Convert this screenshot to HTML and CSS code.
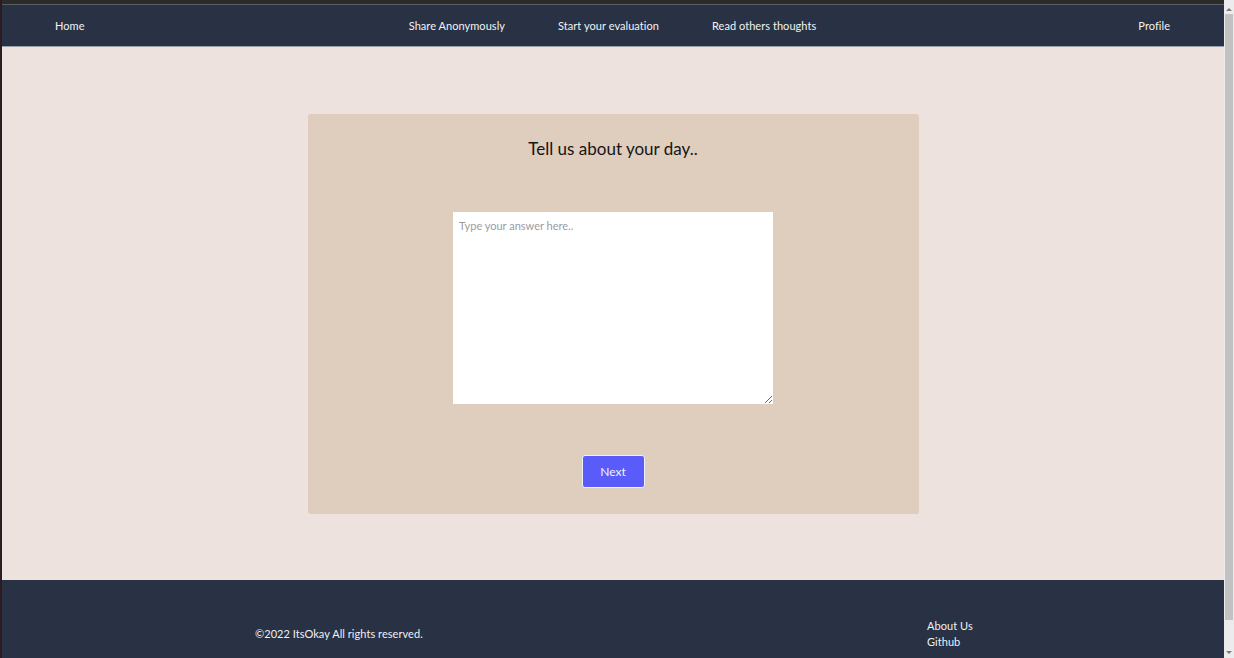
FILE: index.html
```html
<!DOCTYPE html>
<html lang="en">
<head>
<meta charset="utf-8">
<title>ItsOkay</title>
<link rel="stylesheet" href="styles.css">
</head>
<body>
<div class="frame">
  <div class="edge-left"></div>
  <div class="page">
    <div class="topline"></div>
    <nav class="nav">
      <div class="nav-left"><a href="#">Home</a></div>
      <div class="nav-center">
        <a href="#">Share Anonymously</a>
        <a href="#">Start your evaluation</a>
        <a href="#">Read others thoughts</a>
      </div>
      <div class="nav-right"><a href="#">Profile</a></div>
    </nav>
    <main class="main">
      <section class="card">
        <h1 class="card-title">Tell us about your day..</h1>
        <textarea class="answer" placeholder="Type your answer here.."></textarea>
        <button class="next-btn" type="button">Next</button>
      </section>
    </main>
    <footer class="footer">
      <div class="footer-inner">
        <p class="copy">©2022 ItsOkay All rights reserved.</p>
        <ul class="footer-links">
          <li><a href="#">About Us</a></li>
          <li><a href="#">Github</a></li>
        </ul>
      </div>
    </footer>
  </div>
  <div class="scrollbar">
    <div class="sb-arrow sb-up"></div>
    <div class="sb-thumb"></div>
    <div class="sb-rest"></div>
    <div class="sb-arrow sb-down"></div>
  </div>
</div>
</body>
</html>
```
FILE: styles.css
```css
* { box-sizing: border-box; }
html, body { margin: 0; padding: 0; }
body {
  font-family: "Lato", "Noto Sans", sans-serif;
  background: #ede2dd;
  width: 1234px;
  height: 658px;
  overflow: hidden;
}
a { color: inherit; text-decoration: none; }

.frame {
  display: flex;
  height: 658px;
}
.edge-left {
  width: 2px;
  background: #2a1c20;
  flex: none;
}
.page {
  flex: 1;
  display: flex;
  flex-direction: column;
  min-width: 0;
}
.topline {
  height: 5px;
  background: #2b2b2b;
  border-bottom: 1px solid #5a5e64;
  flex: none;
}
.nav {
  height: 42px;
  flex: none;
  background: #283244;
  border-bottom: 1px solid #9aa0a9;
  display: grid;
  grid-template-columns: 1fr auto 1fr;
  align-items: center;
  padding: 0 54px 0 53px;
  color: #f1f2f4;
  font-size: 11px;
  letter-spacing: 0.05px;
}
.nav-center {
  display: flex;
  gap: 53px;
}
.nav-right { justify-self: end; }

.main {
  flex: 1;
  display: flex;
  justify-content: center;
  align-items: flex-start;
  padding-top: 67px;
  background: #ede2dd;
}
.card {
  width: 611px;
  height: 400px;
  background: #dfcdbd;
  border-radius: 3px;
  display: flex;
  flex-direction: column;
  align-items: center;
  padding-top: 24px;
}
.card-title {
  margin: 0;
  font-size: 17px;
  line-height: 22px;
  font-weight: 400;
  color: #151515;
}
.answer {
  margin-top: 52px;
  width: 320px;
  height: 192px;
  border: none;
  background: #ffffff;
  padding: 7px 6px;
  font-family: inherit;
  font-size: 11px;
  resize: vertical;
  outline: none;
}
.answer::placeholder { color: #9a9ca3; }
.next-btn {
  margin-top: 51px;
  width: 63px;
  height: 33px;
  background: #5a5cf9;
  border: 1px solid #eef0ff;
  border-radius: 3px;
  color: #f4f4ff;
  font-family: inherit;
  font-size: 12px;
  cursor: pointer;
}

.footer {
  height: 78px;
  flex: none;
  background: #283244;
  color: #eef0f3;
  font-size: 11px;
  letter-spacing: 0.05px;
  line-height: 16px;
  padding: 38px 0 0 253px;
}
.footer-inner {
  display: grid;
  grid-template-columns: 672px auto;
  align-items: center;
}
.copy { margin: 0; }
.footer-links {
  list-style: none;
  margin: 0;
  padding: 0;
}

.scrollbar {
  width: 10px;
  flex: none;
  display: flex;
  flex-direction: column;
  background: #ececec;
  padding-top: 4px;
}
.sb-arrow {
  height: 10px;
  flex: none;
  position: relative;
}
.sb-up::after, .sb-down::after {
  content: "";
  position: absolute;
  left: 2px;
  border-left: 3px solid transparent;
  border-right: 3px solid transparent;
}
.sb-up::after { top: 4px; border-bottom: 3px solid #7a7a7a; }
.sb-down::after { top: 3px; border-top: 3px solid #7a7a7a; }
.sb-thumb {
  height: 606px;
  margin: 0 1px;
  background: #c2c2c2;
  flex: none;
}
.sb-rest { flex: 1; }
```
